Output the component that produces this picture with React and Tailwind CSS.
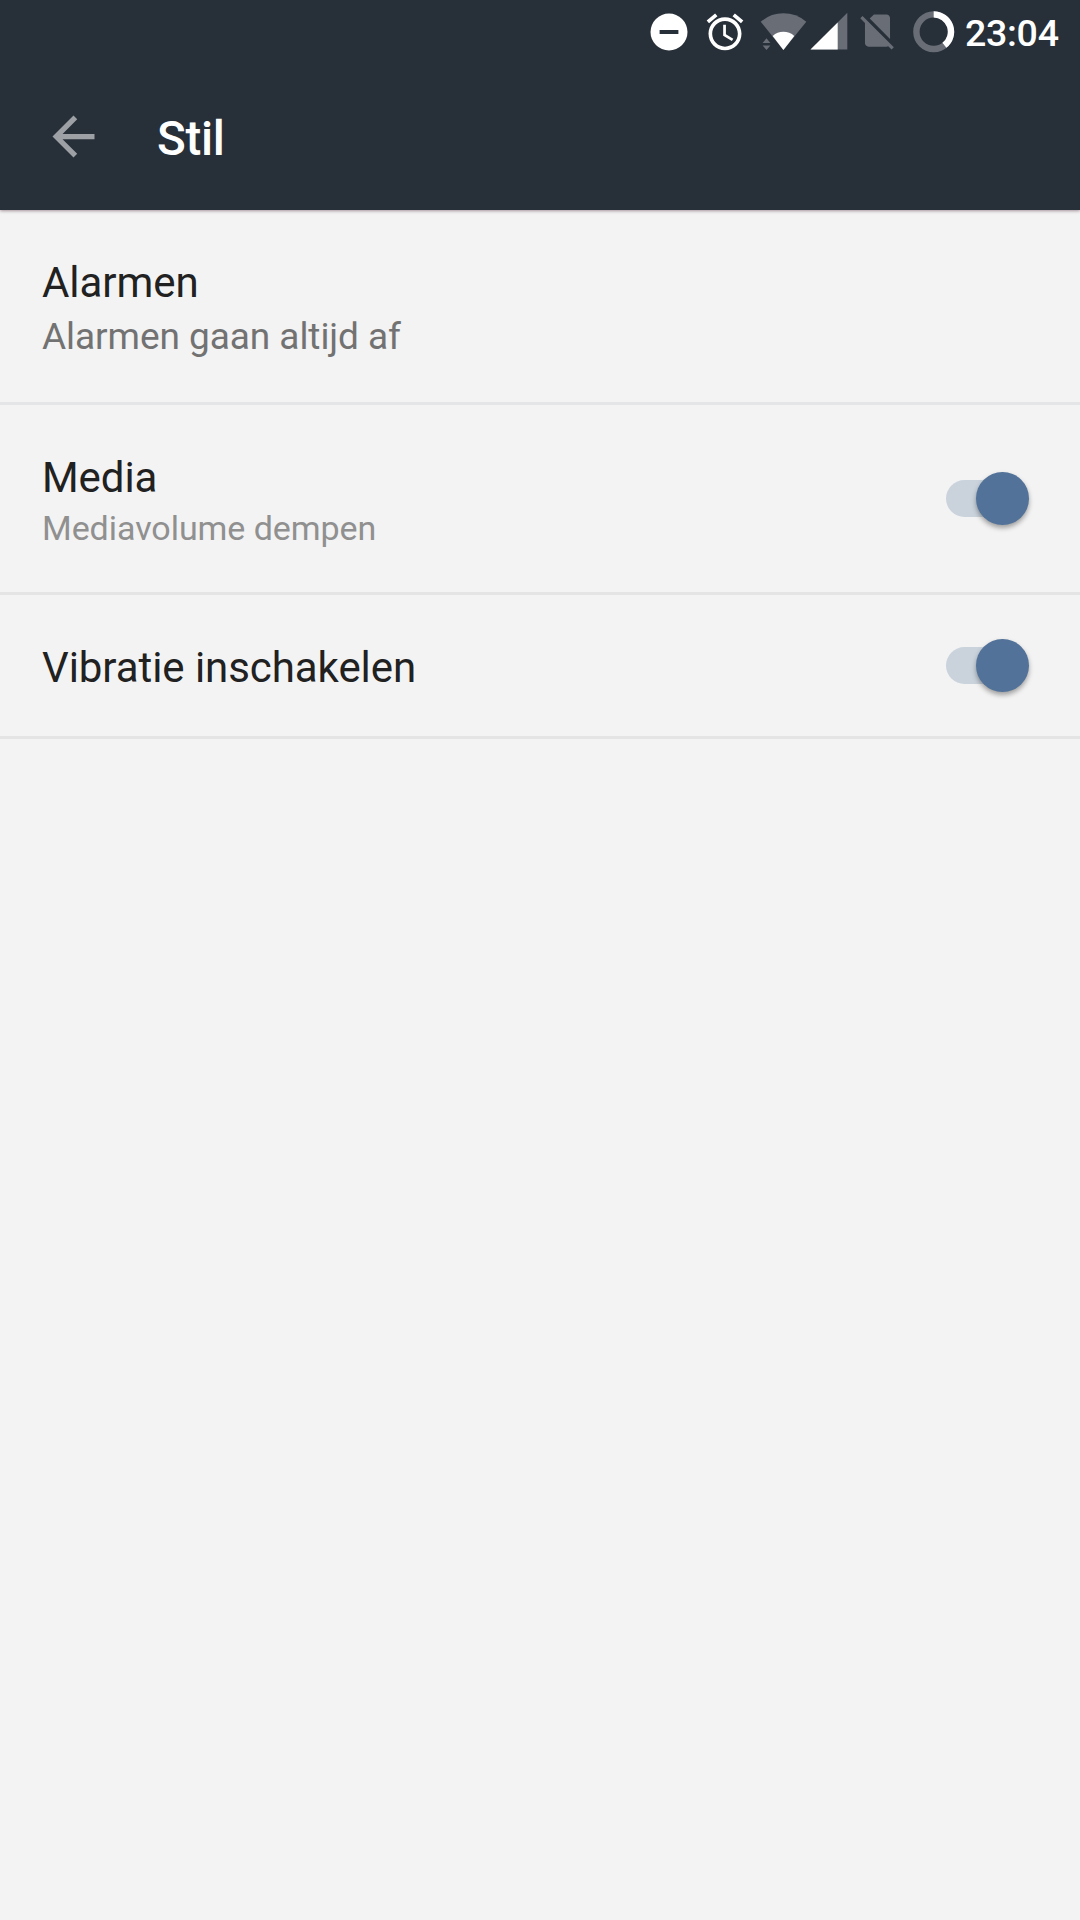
import { useState } from "react";

function StatusBar() {
  return (
    <div className="flex h-[63px] items-start pl-[650px] text-white">
      {/* do not disturb */}
      <svg className="mt-[13px] h-[38px] w-[38px] shrink-0" viewBox="0 0 38 38">
        <circle cx="19" cy="19" r="18.5" fill="#fff" />
        <rect x="9.6" y="17" width="18.8" height="4" fill="#272f38" />
      </svg>
      {/* alarm */}
      <svg className="ml-[15px] mt-[10px] h-[44px] w-[44px] shrink-0" viewBox="0 0 24 24" fill="#fff">
        <path d="M22 5.72l-4.6-3.86-1.29 1.53 4.6 3.86L22 5.72zM7.88 3.39L6.6 1.86 2 5.71l1.29 1.53 4.59-3.85zM12.5 8H11v6l4.75 2.85.75-1.23-4-2.37V8zM12 4c-4.97 0-9 4.03-9 9s4.02 9 9 9c4.97 0 9-4.03 9-9s-4.03-9-9-9zm0 16c-3.87 0-7-3.13-7-7s3.13-7 7-7 7 3.13 7 7-3.13 7-7 7z" />
      </svg>
      {/* wifi */}
      <svg className="ml-[13px] mt-[12px] h-[40px] w-[48px] shrink-0" viewBox="0 0 48 40">
        <path d="M23.4 38 0.7 9.7Q10.5 1.3 23.4 1.3T46.3 9.7Z" fill="#696d76" />
        <path d="M23.4 38 12.7 23.9Q17.2 19.8 23.4 19.8T34.3 23.9Z" fill="#fff" />
        <path d="M2.6 31h7.8l-3.9-4.7ZM2.6 33.6h7.8l-3.9 4.5Z" fill="#696d76" />
      </svg>
      {/* signal */}
      <svg className="ml-[2px] mt-[12px] h-[40px] w-[38px] shrink-0" viewBox="0 0 38 40">
        <path d="M0.5 37.6 37.3 0.8V37.6Z" fill="#696d76" />
        <path d="M0.5 37.6 27.7 10.4V37.6Z" fill="#fff" />
      </svg>
      {/* no sim */}
      <svg className="ml-[8px] mt-[9px] h-[43px] w-[43px] shrink-0" viewBox="0 0 24 24" fill="#696d76">
        <path d="M18.99 5c0-1.1-.89-2-1.99-2h-7L7.66 5.34 19 16.68 18.99 5zM3.65 3.88L2.38 5.15 5 7.77V19c0 1.1.9 2 2 2h10.01c.35 0 .67-.1.96-.26l1.88 1.88 1.27-1.27L3.65 3.88z" />
      </svg>
      {/* battery */}
      <svg className="ml-[14px] mt-[11px] h-[42px] w-[42px] shrink-0" viewBox="0 0 42 42" fill="none" strokeWidth="6.4">
        <circle cx="20.7" cy="20.7" r="17.3" stroke="#696d76" />
        <path d="M20.7 3.4A17.3 17.3 0 0 1 31.4 34.3" stroke="#fff" />
      </svg>
      <span className="ml-[10px] mt-[11px] text-[37.5px] font-medium leading-[44px] tracking-[-0.3px]">23:04</span>
    </div>
  );
}

function Toggle({ checked, onChange }) {
  return (
    <button
      type="button"
      role="switch"
      aria-checked={checked}
      onClick={() => onChange(!checked)}
      className="flex h-[53px] w-[83px] shrink-0 items-center"
    >
      <span className="h-[37px] w-[57px] rounded-l-full bg-[#cad3dc]" />
      <span className="relative -ml-[27px] h-[53px] w-[53px] rounded-full bg-[#527299] shadow-[0_3px_5px_rgba(0,0,0,0.35)]" />
    </button>
  );
}

export default function App() {
  const [media, setMedia] = useState(true);
  const [vibrate, setVibrate] = useState(true);

  return (
    <div className="h-[1920px] w-[1080px] overflow-hidden bg-[#f3f3f3] font-['Roboto',sans-serif] text-[#212121]">
      <header className="relative h-[210px] bg-[#272f38] shadow-[0_1px_3px_rgba(70,30,50,0.45)]">
        <StatusBar />
        <div className="flex h-[147px] items-center pl-[42px]">
          <svg className="h-[63px] w-[63px]" viewBox="0 0 24 24" fill="#9da0a4">
            <path d="M20 11H7.83l5.59-5.59L12 4l-8 8 8 8 1.41-1.41L7.83 13H20v-2z" />
          </svg>
          <h1 className="ml-[52px] mt-[4px] text-[47.5px] font-medium leading-[56px] tracking-[-0.3px] text-white">Stil</h1>
        </div>
      </header>

      <main>
        <div className="h-[195px] border-b-[3px] border-[#e3e5e7] px-[42px] pt-[48px]">
          <h2 className="text-[42px] leading-[50px] tracking-[-0.06px]">Alarmen</h2>
          <p className="mt-[7px] text-[37px] leading-[44px] tracking-[-0.06px] text-[#727272]">Alarmen gaan altijd af</p>
        </div>

        <div className="flex h-[190px] justify-between border-b-[3px] border-[#e4e4e4] pl-[42px] pr-[51px]">
          <div className="pt-[48px]">
            <h2 className="text-[42px] leading-[50px] tracking-[-0.06px]">Media</h2>
            <p className="mt-[5px] text-[34px] leading-[40px] tracking-[-0.05px] text-[#909090]">Mediavolume dempen</p>
          </div>
          <div className="pt-[67px]">
            <Toggle checked={media} onChange={setMedia} />
          </div>
        </div>

        <div className="flex h-[144px] justify-between border-b-[3px] border-[#e4e4e4] pl-[42px] pr-[51px]">
          <h2 className="pt-[48px] text-[42px] leading-[50px] tracking-[-0.06px]">Vibratie inschakelen</h2>
          <div className="pt-[44px]">
            <Toggle checked={vibrate} onChange={setVibrate} />
          </div>
        </div>
      </main>
    </div>
  );
}
